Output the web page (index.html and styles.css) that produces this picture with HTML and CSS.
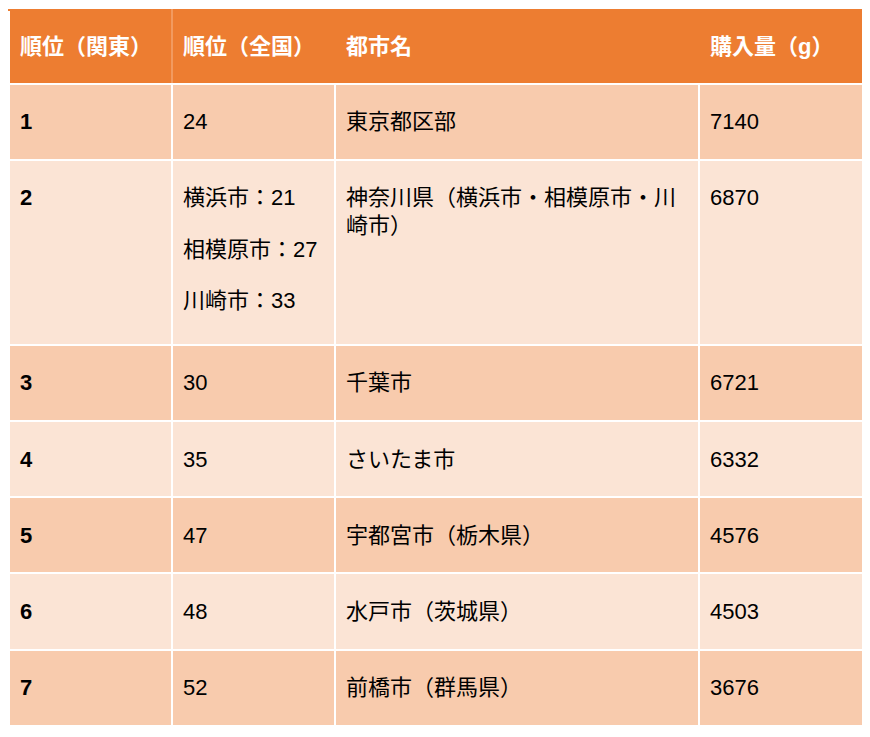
FILE: index.html
```html
<!DOCTYPE html>
<html lang="ja">
<head>
<meta charset="utf-8">
<title>購入量ランキング</title>
<link rel="stylesheet" href="styles.css">
</head>
<body>
<table class="rank">
  <colgroup>
    <col class="c1"><col class="c2"><col class="c3"><col class="c4">
  </colgroup>
  <thead>
    <tr>
      <th class="h-first">順位（関東）</th>
      <th>順位（全国）</th>
      <th>都市名</th>
      <th>購入量（g）</th>
    </tr>
  </thead>
  <tbody>
    <tr class="odd">
      <td class="num">1</td><td>24</td><td>東京都区部</td><td>7140</td>
    </tr>
    <tr class="even">
      <td class="num">2</td>
      <td class="multi">
        <p>横浜市：21</p>
        <p>相模原市：27</p>
        <p>川崎市：33</p>
      </td>
      <td>神奈川県（横浜市・相模原市・川崎市）</td>
      <td>6870</td>
    </tr>
    <tr class="odd">
      <td class="num">3</td><td>30</td><td>千葉市</td><td>6721</td>
    </tr>
    <tr class="even">
      <td class="num">4</td><td>35</td><td>さいたま市</td><td>6332</td>
    </tr>
    <tr class="odd">
      <td class="num">5</td><td>47</td><td>宇都宮市（栃木県）</td><td>4576</td>
    </tr>
    <tr class="even">
      <td class="num">6</td><td>48</td><td>水戸市（茨城県）</td><td>4503</td>
    </tr>
    <tr class="odd">
      <td class="num">7</td><td>52</td><td>前橋市（群馬県）</td><td>3676</td>
    </tr>
  </tbody>
</table>
</body>
</html>
```

FILE: styles.css
```css
html, body {
  background: #ffffff;
}
body {
  margin: 9px 8px 8px 8px;
  font-family: "Liberation Sans", Arial, "Noto Sans CJK JP", sans-serif;
  font-size: 22px;
  line-height: 27.5px;
  color: #000000;
}
.rank {
  width: 855px;
  table-layout: fixed;
  border-collapse: collapse;
}
.c1 { width: 163px; }
.c2 { width: 163px; }
.c3 { width: 364px; }
.c4 { width: 165px; }

.rank th,
.rank td {
  text-align: left;
  vertical-align: top;
  padding: 23.5px 10px 23.2px 10px;
  border: 2px solid #ffffff;
}
.rank th {
  background: #ed7d31;
  color: #ffffff;
  font-weight: bold;
  padding: 22px 10px 22px 10px;
  border-top-color: #ed7d31;
  border-left-color: #ed7d31;
  border-right-color: #ed7d31;
}
.rank th.h-first {
  border-left-color: #ffffff;
  border-right-color: #f29a5f;
}
.rank thead th:last-child {
  border-right-color: #ffffff;
}
.odd td { background: #f8cbad; }
.even td { background: #fbe4d5; }
.num { font-weight: bold; }
.multi p {
  margin: 0 0 24px 0;
}
.multi p:last-child {
  margin-bottom: 6px;
}
```
